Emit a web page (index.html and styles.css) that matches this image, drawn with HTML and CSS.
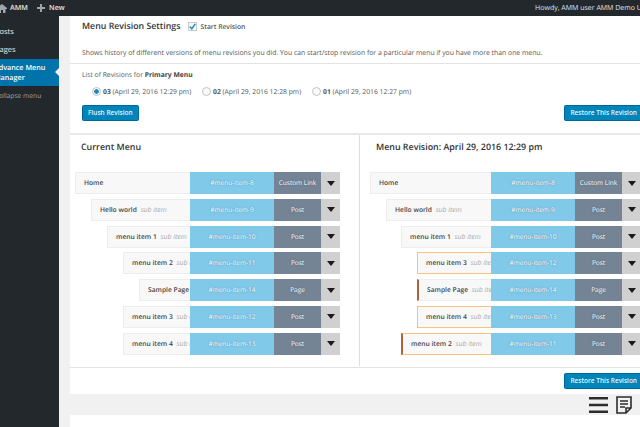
FILE: index.html
```html
<!DOCTYPE html>
<html lang="en">
<head>
    <meta charset="UTF-8">
    <title>Menu Revision Settings</title>
    <link rel="stylesheet" href="styles.css">
</head>
<body>
<header class="adminbar">
    <div class="adminbar-left">
        <svg class="home-icon" width="7" height="10" viewBox="0 0 7 10"><path d="M-3 5 L2 1 L7 5 V6 H5.5 V10 H3 V7 H1 V10 H-1 V6 H-3 Z" fill="#a0a5aa"/></svg>
        <span class="site-name">AMM</span>
        <svg class="plus-icon" width="8" height="8" viewBox="0 0 8 8"><path d="M3 0H5V3H8V5H5V8H3V5H0V3H3Z" fill="#a0a5aa"/></svg>
        <span>New</span>
    </div>
    <div class="howdy">Howdy, AMM user AMM Demo User</div>
</header>
<div class="wrap">
    <nav class="sidebar">
        <a class="side-item">Posts</a>
        <a class="side-item">Pages</a>
        <a class="side-item current">Advance Menu<br>Manager</a>
        <a class="side-item collapse">Collapse menu</a>
    </nav>
    <main class="content">
        <div class="panel">
            <section class="settings">
                <div class="title-row">
                    <h2>Menu Revision Settings</h2>
                    <span class="checkbox">
                        <svg width="7" height="7" viewBox="0 0 7 7"><path d="M0.8 3.6 L2.8 5.8 L6.2 0.8" fill="none" stroke="#1e8cbe" stroke-width="1.5"/></svg>
                    </span>
                    <span class="start">Start Revision</span>
                </div>
                <p class="desc">Shows history of different versions of menu revisions you did. You can start/stop revision for a particular menu if you have more than one menu.</p>
            </section>
            <section class="revisions">
                <p class="list-title">List of Revisions for <b>Primary Menu</b></p>
                <div class="radios">
                    <label><i class="radio on"></i><span><b>03</b> (April 29, 2016 12:29 pm)</span></label>
                    <label><i class="radio"></i><span><b>02</b> (April 29, 2016 12:28 pm)</span></label>
                    <label><i class="radio"></i><span><b>01</b> (April 29, 2016 12:27 pm)</span></label>
                </div>
                <div class="actions">
                    <button class="btn">Flush Revision</button>
                    <button class="btn">Restore This Revision</button>
                </div>
            </section>
            <section class="compare">
                <div class="col col-current">
                    <h3>Current Menu</h3>
                    <div class="row"><div class="label">Home</div><div class="anchor">#menu-item-8</div><div class="type">Custom Link</div><div class="drop"></div></div>
                    <div class="row d1"><div class="label">Hello world <em>sub item</em></div><div class="anchor">#menu-item-9</div><div class="type">Post</div><div class="drop"></div></div>
                    <div class="row d2"><div class="label">menu item 1 <em>sub item</em></div><div class="anchor">#menu-item-10</div><div class="type">Post</div><div class="drop"></div></div>
                    <div class="row d3"><div class="label">menu item 2 <em>sub item</em></div><div class="anchor">#menu-item-11</div><div class="type">Post</div><div class="drop"></div></div>
                    <div class="row d4"><div class="label">Sample Page <em>sub item</em></div><div class="anchor">#menu-item-14</div><div class="type">Page</div><div class="drop"></div></div>
                    <div class="row d3"><div class="label">menu item 3 <em>sub item</em></div><div class="anchor">#menu-item-12</div><div class="type">Post</div><div class="drop"></div></div>
                    <div class="row d3"><div class="label">menu item 4 <em>sub item</em></div><div class="anchor">#menu-item-13</div><div class="type">Post</div><div class="drop"></div></div>
                </div>
                <div class="col col-revision">
                    <h3>Menu Revision: April 29, 2016 12:29 pm</h3>
                    <div class="row"><div class="label">Home</div><div class="anchor">#menu-item-8</div><div class="type">Custom Link</div><div class="drop"></div></div>
                    <div class="row d1"><div class="label">Hello world <em>sub item</em></div><div class="anchor">#menu-item-9</div><div class="type">Post</div><div class="drop"></div></div>
                    <div class="row d2"><div class="label">menu item 1 <em>sub item</em></div><div class="anchor">#menu-item-10</div><div class="type">Post</div><div class="drop"></div></div>
                    <div class="row d3 changed"><div class="label">menu item 3 <em>sub item</em></div><div class="anchor">#menu-item-12</div><div class="type">Post</div><div class="drop"></div></div>
                    <div class="row d3 moved"><div class="label">Sample Page <em>sub item</em></div><div class="anchor">#menu-item-14</div><div class="type">Page</div><div class="drop"></div></div>
                    <div class="row d3 changed"><div class="label">menu item 4 <em>sub item</em></div><div class="anchor">#menu-item-13</div><div class="type">Post</div><div class="drop"></div></div>
                    <div class="row d2 changed moved"><div class="label">menu item 2 <em>sub item</em></div><div class="anchor">#menu-item-11</div><div class="type">Post</div><div class="drop"></div></div>
                </div>
            </section>
            <div class="restore-row"><button class="btn">Restore This Revision</button></div>
        </div>
        <div class="toolbar">
            <svg width="20" height="16" viewBox="0 0 20 16"><path d="M0 1.2H19M0 8H19M0 14.8H19" stroke="#2c2c2c" stroke-width="2.4"/></svg>
            <svg width="16" height="18" viewBox="0 0 16 18"><path d="M1 1H15V12L10 17H1Z M10 17V12H15" fill="none" stroke="#2c2c2c" stroke-width="1.6"/><path d="M4 5H12M4 8H12M4 11H9" stroke="#2c2c2c" stroke-width="1.3"/></svg>
        </div>
        <div class="panel-next"></div>
    </main>
</div>
</body>
</html>
```

FILE: styles.css
```css
html, body {
    margin: 0;
    padding: 0;
    width: 640px;
    height: 427px;
    overflow: hidden;
    background-color: #f1f1f1;
    font-family: "Open Sans", "Liberation Sans", sans-serif;
    color: #444;
    text-rendering: geometricPrecision;
}

.adminbar {
    display: flex;
    justify-content: space-between;
    align-items: center;
    height: 16px;
    background-color: #23282d;
    color: #e4e6e8;
    font-size: 7.2px;
    font-weight: 600;
    white-space: nowrap;
    overflow: hidden;
}

.adminbar-left {
    display: flex;
    align-items: center;
}

.home-icon {
    margin-right: 3px;
}

.site-name {
    margin-right: 9px;
}

.plus-icon {
    margin-right: 4px;
}

.howdy {
    margin-right: -12px;
    font-size: 7px;
    font-weight: 400;
}

.wrap {
    display: flex;
    height: 411px;
}

.sidebar {
    flex: 0 0 59px;
    padding-top: 8px;
    background-color: #23282d;
    overflow: hidden;
    color: #eee;
    font-size: 7.5px;
    white-space: nowrap;
}

.side-item {
    display: block;
    margin-left: -5px;
    padding: 3px 0;
    height: 11.5px;
    line-height: 11.5px;
}

.side-item.current {
    position: relative;
    margin-left: -6px;
    height: 20px;
    padding: 4px 0 3px;
    line-height: 10px;
    background-color: #0073aa;
    color: #fff;
    font-size: 7.2px;
    font-weight: 600;
}

.side-item.current::after {
    content: "";
    position: absolute;
    right: 0;
    top: 9px;
    border: 4px solid transparent;
    border-left-width: 0;
    border-right-color: #f1f1f1;
}

.side-item.collapse {
    color: #a0a5aa;
    font-size: 6.7px;
    margin-top: 1px;
}

.content {
    flex: 1;
    min-width: 0;
    overflow: hidden;
}

.panel {
    margin-left: 11px;
    background-color: #fff;
}

.settings {
    height: 47px;
    padding: 0 0 0 12px;
    border-bottom: 1px solid #e3e3e3;
}

.title-row {
    display: flex;
    align-items: center;
    height: 20px;
}

h2 {
    margin: 0 7px 0 0;
    font-size: 8.8px;
    font-weight: 600;
    color: #333;
}

.checkbox {
    display: flex;
    align-items: center;
    justify-content: center;
    box-sizing: border-box;
    width: 9px;
    height: 9px;
    margin-right: 4px;
    border: 1px solid #c8c8c8;
    background-color: #f8f8f8;
}

.start {
    font-size: 6.75px;
    font-weight: 600;
    color: #555;
}

.desc {
    margin: 12px 0 0;
    font-size: 6.85px;
    line-height: 11px;
    white-space: nowrap;
    color: #555;
}

.revisions {
    height: 69px;
    padding: 0 0 0 12px;
    border-bottom: 2px solid #e8e8e8;
}

.list-title {
    margin: 0;
    padding-top: 5px;
    font-size: 6.75px;
    line-height: 11px;
    color: #555;
}

.list-title b {
    font-weight: 700;
    color: #444;
}

.radios {
    display: flex;
    margin: 6px 0 0 10px;
    height: 11px;
    font-size: 6.8px;
    line-height: 11px;
    color: #555;
}

.radios label {
    display: flex;
    flex: 0 0 110px;
    align-items: center;
    white-space: nowrap;
}

.radios b {
    font-weight: 700;
}

.radio {
    box-sizing: border-box;
    width: 9px;
    height: 9px;
    margin-right: 2px;
    border: 1px solid #c4c4c4;
    border-radius: 50%;
    background-color: #fafafa;
}

.radio.on {
    background: radial-gradient(circle, #1e8cbe 0 2px, #fafafa 2.6px);
}

.actions {
    display: flex;
    justify-content: space-between;
    margin-top: 8px;
    margin-right: -3px;
}

.btn {
    height: 16px;
    padding: 0 5px;
    border: 1px solid #006799;
    border-radius: 1.5px;
    background-color: #0085ba;
    color: #e8f4fa;
    font-family: inherit;
    font-size: 6.5px;
    font-weight: 600;
    line-height: 14px;
    white-space: nowrap;
}

.compare {
    display: flex;
    height: 232px;
    border-bottom: 1px solid #e3e3e3;
}

.col {
    box-sizing: border-box;
    min-width: 0;
}

.col-current {
    flex: 0 0 290px;
    padding: 0 19px 0 5px;
    border-right: 1px solid #ddd;
    height: 231px;
}

.col-revision {
    flex: 0 0 281px;
    padding-left: 10px;
}

h3 {
    margin: 0;
    padding: 5px 0 0 6px;
    height: 37px;
    box-sizing: border-box;
    font-size: 8.9px;
    line-height: 14px;
    font-weight: 600;
    color: #333;
}

.row {
    display: flex;
    box-sizing: border-box;
    height: 22px;
    margin: 0 0 4.8px 0;
    border: 1px solid #ededed;
    background-color: #f8f8f8;
    font-size: 6.7px;
    line-height: 20px;
    white-space: nowrap;
}

.row.d1 { margin-left: 16px; }
.row.d2 { margin-left: 32px; }
.row.d3 { margin-left: 48px; }
.row.d4 { margin-left: 64px; }

.col-revision .row.d2 { margin-left: 31px; }
.col-revision .row.d3 { margin-left: 47px; }

.row.changed {
    border-color: #f9c27d;
}

.row.moved {
    border-left: 2px solid #b0603a;
}

.label {
    flex: 1;
    min-width: 0;
    padding-left: 8px;
    overflow: hidden;
    font-weight: 600;
    color: #444;
}

.label em {
    margin-left: 2px;
    font-size: 6.9px;
    font-weight: 400;
    color: #aaa;
}

.anchor, .type {
    flex: none;
    margin: -1px 0;
    font-size: 6.5px;
    line-height: 22px;
    text-align: center;
    color: #fff;
    text-shadow: 0 0 1.5px rgba(50, 85, 120, 0.7);
}

.anchor {
    width: 84px;
    background-color: #81c9e9;
}

.type {
    width: 47px;
    background-color: #748494;
}

.drop {
    display: flex;
    flex: none;
    align-items: center;
    justify-content: center;
    width: 19px;
    margin: -1px -1px -1px 0;
    background-color: #d0d0d0;
}

.drop::after {
    content: "";
    border: 4.5px solid transparent;
    border-top: 5px solid #1a1a1a;
    border-bottom-width: 0;
}

.restore-row {
    display: flex;
    justify-content: flex-end;
    height: 26px;
    margin-right: -3px;
    padding-top: 5px;
    box-sizing: border-box;
}

.toolbar {
    display: flex;
    justify-content: flex-end;
    align-items: center;
    gap: 7px;
    height: 21px;
    padding-right: 8px;
}

.panel-next {
    margin-left: 11px;
    height: 20px;
    background-color: #fff;
}
```
